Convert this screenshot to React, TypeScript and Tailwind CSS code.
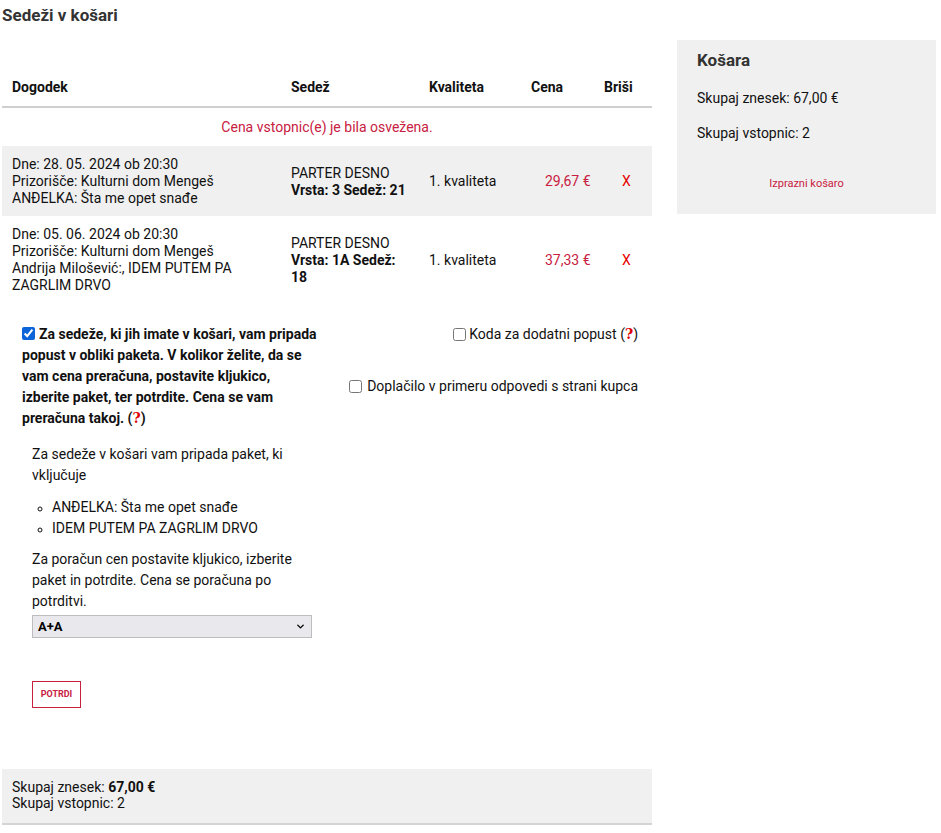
import { ChevronDown } from 'lucide-react';

const rows = [
  {
    id: 1,
    lines: ['Dne: 28. 05. 2024 ob 20:30', 'Prizorišče: Kulturni dom Mengeš', 'ANĐELKA: Šta me opet snađe'],
    seat: 'Vrsta: 3 Sedež: 21',
    price: '29,67 €',
    shaded: true,
  },
  {
    id: 2,
    lines: ['Dne: 05. 06. 2024 ob 20:30', 'Prizorišče: Kulturni dom Mengeš', 'Andrija Milošević:, IDEM PUTEM PA ZAGRLIM DRVO'],
    seat: 'Vrsta: 1A Sedež: 18',
    price: '37,33 €',
    shaded: false,
  },
];

function Help() {
  return (
    <span>
      (<span className="font-bold text-[#e00000] font-['DejaVu_Serif',serif]">?</span>)
    </span>
  );
}

export default function App() {
  return (
    <div className="min-h-[833px] bg-white font-['Roboto',sans-serif] text-[#111]">
      <h1 className="px-[2px] pt-[5px] text-[17px] font-bold text-[#333] leading-[20px]">Sedeži v košari</h1>

      <div className="flex items-start gap-[25px] pl-[2px] pt-[15px]">
        {/* Main column */}
        <div className="w-[650px]">
          <table className="w-full table-fixed border-collapse text-[14px] leading-[17px]">
            <thead>
              <tr className="border-b-2 border-[#cfcfcf] text-left">
                <th className="w-[289px] pl-[10px] pt-[39px] pb-[10px] font-bold">Dogodek</th>
                <th className="w-[138px] pt-[39px] pb-[10px] font-bold">Sedež</th>
                <th className="w-[102px] pt-[39px] pb-[10px] font-bold">Kvaliteta</th>
                <th className="w-[73px] pt-[39px] pb-[10px] font-bold">Cena</th>
                <th className="pt-[39px] pb-[10px] font-bold">Briši</th>
              </tr>
            </thead>
            <tbody>
              <tr>
                <td colSpan={5} className="pt-[11px] pb-[10px] text-center text-[#c8203f]">
                  Cena vstopnic(e) je bila osvežena.
                </td>
              </tr>
              {rows.map(row => (
                <tr key={row.id} className={row.shaded ? 'bg-[#f0f0f0]' : ''}>
                  <td className="pt-[10px] pb-[9px] pl-[10px] pr-[40px] align-middle">
                    {row.lines.map(l => (
                      <div key={l}>{l}</div>
                    ))}
                  </td>
                  <td className="pt-[10px] pb-[9px] pr-[18px] align-middle">
                    <div>PARTER DESNO</div>
                    <div className="font-bold">{row.seat}</div>
                  </td>
                  <td className="pt-[10px] pb-[9px] align-middle">1. kvaliteta</td>
                  <td className="pt-[10px] pb-[9px] pl-[14px] align-middle text-[#c8203f]">{row.price}</td>
                  <td className="pt-[10px] pb-[9px] pl-[18px] align-middle text-[#e60000]">X</td>
                </tr>
              ))}
            </tbody>
          </table>

          {/* Package / discount options */}
          <div className="mt-[21px] flex justify-between text-[14px] leading-[21px]">
            <div className="w-[317px] pl-[20px]">
              <p className="font-bold">
                <input type="checkbox" defaultChecked className="mr-[4px] h-[13px] w-[13px] align-[-1px] accent-[#0b64d8]" />
                Za sedeže, ki jih imate v košari, vam pripada popust v obliki paketa. V kolikor želite, da se vam cena preračuna, postavite kljukico, izberite paket, ter potrdite. Cena se vam preračuna takoj. <Help />
              </p>

              <div className="mt-[15px] pl-[10px] pr-[5px]">
                <p>Za sedeže v košari vam pripada paket, ki vključuje</p>
                <ul className="mt-[11px] mb-[10px] pl-[20px] list-[circle] marker:text-[12px]">
                  <li>ANĐELKA: Šta me opet snađe</li>
                  <li>IDEM PUTEM PA ZAGRLIM DRVO</li>
                </ul>
                <p>Za poračun cen postavite kljukico, izberite paket in potrdite. Cena se poračuna po potrditvi.</p>
                <div className="relative mt-[3px] w-[280px]">
                  <select className="h-[23px] w-full appearance-none border border-[#bdbdbd] bg-[#e9e9ed] pl-[5px] text-[13px] font-bold text-black">
                    <option>A+A</option>
                  </select>
                  <ChevronDown className="pointer-events-none absolute right-[6px] top-[6px] h-[11px] w-[11px] text-black" strokeWidth={3} />
                </div>
                <button className="mt-[43px] h-[27px] w-[49px] border border-[#c8203f] text-[9px] font-bold text-[#c8203f]">
                  POTRDI
                </button>
              </div>
            </div>

            <div className="flex flex-col items-end pr-[14px]">
              <label className="flex items-center gap-[3px]">
                <input type="checkbox" className="h-[13px] w-[13px]" />
                <span>Koda za dodatni popust <Help /></span>
              </label>
              <label className="mt-[31px] flex items-center gap-[5px]">
                <input type="checkbox" className="h-[13px] w-[13px]" />
                <span>Doplačilo v primeru odpovedi s strani kupca</span>
              </label>
            </div>
          </div>

          {/* Totals */}
          <div className="mt-[61px] border-b-2 border-[#d4d4d4] bg-[#f0f0f0] px-[10px] pt-[10px] pb-[12px] text-[14px] leading-[16px]">
            <div>
              Skupaj znesek: <b>67,00 €</b>
            </div>
            <div>Skupaj vstopnic: 2</div>
          </div>
        </div>

        {/* Sidebar */}
        <aside className="w-[259px] bg-[#f0f0f0] px-[20px] pt-[10px] pb-[22px] text-[14px] text-[#111]">
          <h2 className="text-[17px] font-bold leading-[20px] text-[#333]">Košara</h2>
          <p className="mt-[20px] leading-[17px]">Skupaj znesek: 67,00 €</p>
          <p className="mt-[18px] leading-[17px]">Skupaj vstopnic: 2</p>
          <p className="mt-[34px] text-center text-[11px] leading-[16px] text-[#c8203f]">Izprazni košaro</p>
        </aside>
      </div>
    </div>
  );
}
